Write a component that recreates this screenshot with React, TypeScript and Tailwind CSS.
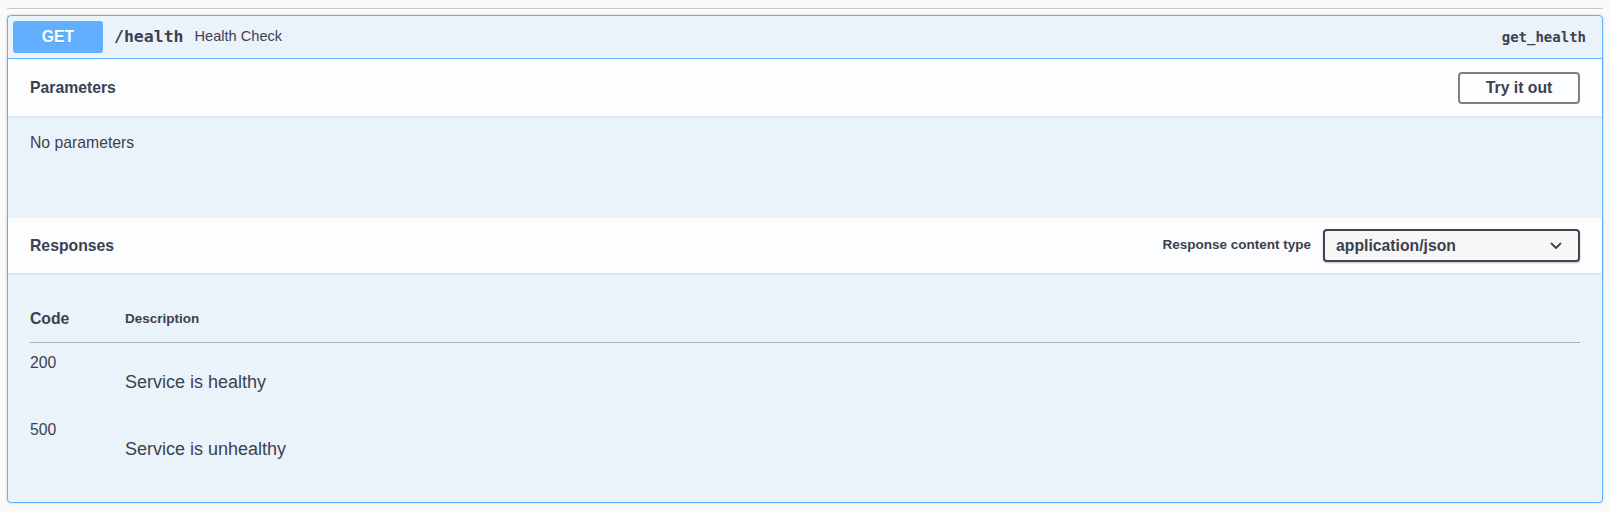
import React from "react";

const sans = "font-['Liberation_Sans',Arial,sans-serif]";
const mono = "font-['DejaVu_Sans_Mono',monospace]";

const responses = [
  { code: "200", description: "Service is healthy" },
  { code: "500", description: "Service is unhealthy" },
];

export default function App() {
  return (
    <div className={`min-h-[512px] bg-[#fafafa] px-[7px] pt-[8px] text-[#3b4151] ${sans}`}>
      <div className="h-px bg-[#c6c7ca]" />

      {/* opblock GET */}
      <div className="mt-[6px] rounded-[4px] border border-[#61affe] bg-[#ebf3fa] shadow-[0_0_3px_rgba(0,0,0,0.19)]">
        {/* summary */}
        <div className="flex items-center border-b border-[#61affe] p-[5px]">
          <span className="flex h-[32px] w-[90px] items-center justify-center rounded-[3px] bg-[#61affe] text-[15.75px] font-bold text-white [text-shadow:0_1px_0_rgba(0,0,0,0.1)]">
            GET
          </span>
          <span className={`px-[11px] text-[16.5px] font-bold leading-[18px] ${mono}`}>/health</span>
          <span className="text-[14.6px]">Health Check</span>
          <span className={`ml-auto pr-[11px] text-[14px] font-semibold ${mono}`}>get_health</span>
        </div>

        {/* parameters */}
        <div className="relative flex h-[57px] items-center justify-between bg-white/80 px-[22px] shadow-[0_1px_2px_rgba(0,0,0,0.1)]">
          <h4 className="text-[15.75px] font-bold">Parameters</h4>
          <button className="flex h-[32px] w-[122px] items-center justify-center rounded-[4px] border-2 border-[#808080] bg-transparent text-[15.75px] font-bold text-[#3b4151]">
            Try it out
          </button>
        </div>
        <div className="h-[102px] px-[22px] pt-[18px]">
          <p className="text-[15.75px] leading-[18px]">No parameters</p>
        </div>

        {/* responses */}
        <div className="relative flex h-[55px] items-center justify-between bg-white/80 px-[22px] shadow-[0_1px_2px_rgba(0,0,0,0.1)]">
          <h4 className="text-[15.75px] font-bold">Responses</h4>
          <div className="flex items-center gap-[12px]">
            <span className="text-[13.5px] font-bold">Response content type</span>
            <div className="flex h-[33px] w-[257px] items-center justify-between rounded-[4px] border-2 border-[#41444e] bg-[#f7f7f7] pl-[11px] pr-[16px] shadow-[0_1px_2px_rgba(0,0,0,0.25)]">
              <span className="text-[15.75px] font-bold">application/json</span>
              <svg width="12" height="8" viewBox="0 0 12 8" fill="none">
                <path d="M1.5 1.5L6 6L10.5 1.5" stroke="#3b4151" strokeWidth="1.8" strokeLinecap="round" strokeLinejoin="round" />
              </svg>
            </div>
          </div>
        </div>
        <div className="px-[22px] pb-[25px] pt-[22px]">
          <table className="w-full border-collapse">
            <thead>
              <tr className="border-b border-[#aab1bd]">
                <th className="w-[95px] py-[13.5px] text-left text-[15.75px] font-bold leading-[20px]">Code</th>
                <th className="py-[13.5px] text-left text-[13.5px] font-bold leading-[20px]">Description</th>
              </tr>
            </thead>
            <tbody>
              {responses.map((r) => (
                <tr key={r.code}>
                  <td className="pt-[11px] align-top text-[15.75px] leading-[18px]">{r.code}</td>
                  <td className="pt-[11px] align-top">
                    <p className="my-[18px] text-[18px] leading-[20px]">{r.description}</p>
                  </td>
                </tr>
              ))}
            </tbody>
          </table>
        </div>
      </div>
    </div>
  );
}
